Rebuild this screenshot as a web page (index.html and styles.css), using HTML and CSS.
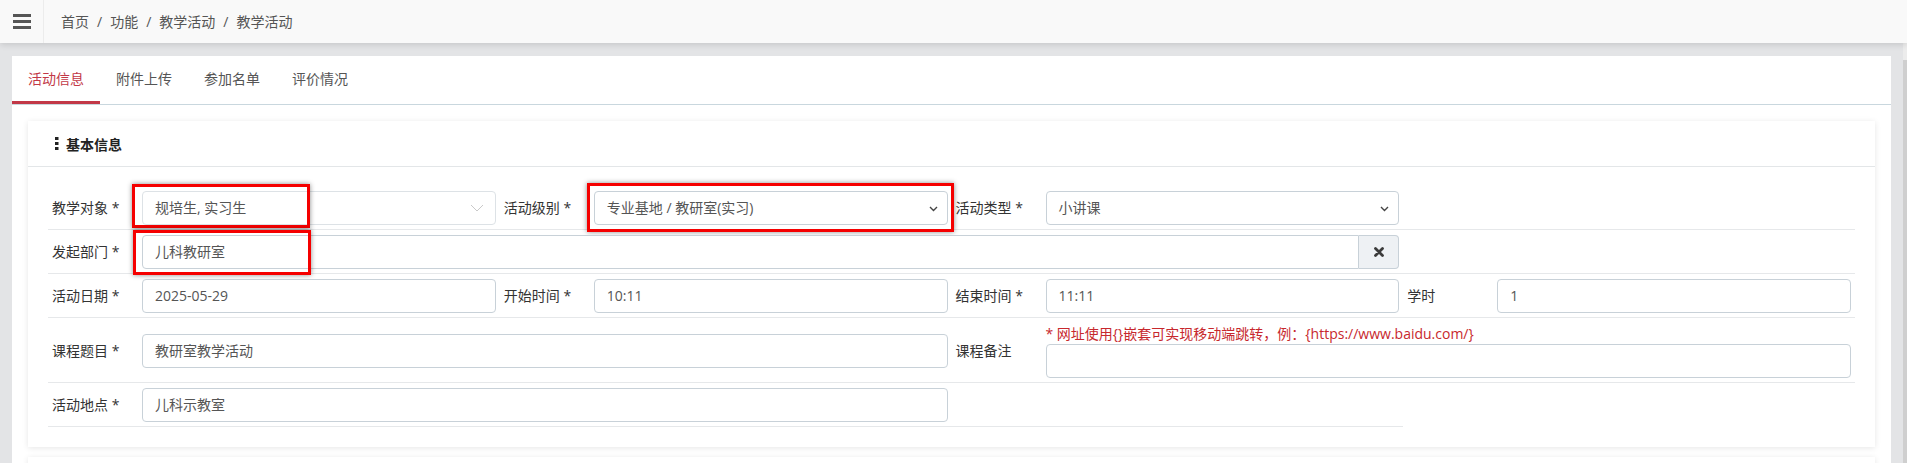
FILE: index.html
```html
<!DOCTYPE html>
<html lang="zh-CN">
<head>
    <meta charset="UTF-8">
    <meta name="viewport" content="width=device-width, initial-scale=1.0">
    <title>教学活动</title>
    <link rel="stylesheet" href="styles.css">
</head>
<body>
    <header class="topbar">
        <div class="menu-toggle">
            <span></span><span></span><span></span>
        </div>
        <nav class="crumbs">
            <span>首页</span><span class="sep">/</span><span>功能</span><span class="sep">/</span><span>教学活动</span><span class="sep">/</span><span>教学活动</span>
        </nav>
    </header>
    <div class="page">
        <main class="content">
            <div class="panel">
                <ul class="tabs">
                    <li class="active">活动信息</li>
                    <li>附件上传</li>
                    <li>参加名单</li>
                    <li>评价情况</li>
                </ul>
                <div class="tab-body">
                    <section class="box">
                        <div class="box-head">
                            <svg class="dots" width="4" height="13" viewBox="0 0 4 13"><rect x="0" y="0" width="3.5" height="3"/><rect x="0" y="5" width="3.5" height="3"/><rect x="0" y="10" width="3.5" height="3"/></svg>
                            <span>基本信息</span>
                        </div>
                        <div class="box-body">
                            <!-- 第一行：对象 / 级别 / 类型 -->
                            <div class="row">
                                <div class="field">
                                    <label>教学对象 *</label>
                                    <div class="control">
                                        <div class="input multi">规培生, 实习生
                                            <svg class="caret-light" width="14" height="8" viewBox="0 0 14 8"><path d="M1 1l6 6 6-6" fill="none" stroke="#c9c9c9" stroke-width="1"/></svg>
                                        </div>
                                        <div class="mark mark-target"></div>
                                    </div>
                                </div>
                                <div class="field">
                                    <label>活动级别 *</label>
                                    <div class="control">
                                        <div class="input select">专业基地 / 教研室(实习)
                                            <svg class="caret" width="9" height="6" viewBox="0 0 9 6"><path d="M1 1l3.5 3.5L8 1" fill="none" stroke="#444" stroke-width="1.4"/></svg>
                                        </div>
                                        <div class="mark mark-level"></div>
                                    </div>
                                </div>
                                <div class="field">
                                    <label>活动类型 *</label>
                                    <div class="control">
                                        <div class="input select">小讲课
                                            <svg class="caret" width="9" height="6" viewBox="0 0 9 6"><path d="M1 1l3.5 3.5L8 1" fill="none" stroke="#444" stroke-width="1.4"/></svg>
                                        </div>
                                    </div>
                                </div>
                            </div>
                            <!-- 发起部门 -->
                            <div class="row">
                                <div class="field span-3">
                                    <label>发起部门 *</label>
                                    <div class="control">
                                        <div class="input-group">
                                            <div class="input">儿科教研室</div>
                                            <span class="addon">
                                                <svg width="10" height="10" viewBox="0 0 10 10"><path d="M1.5 1.5l7 7M8.5 1.5l-7 7" stroke="#3b3b3b" stroke-width="2.8" stroke-linecap="round"/></svg>
                                            </span>
                                        </div>
                                        <div class="mark mark-dept"></div>
                                    </div>
                                </div>
                            </div>
                            <!-- 时间 -->
                            <div class="row">
                                <div class="field">
                                    <label>活动日期 *</label>
                                    <div class="control"><div class="input">2025-05-29</div></div>
                                </div>
                                <div class="field">
                                    <label>开始时间 *</label>
                                    <div class="control"><div class="input">10:11</div></div>
                                </div>
                                <div class="field">
                                    <label>结束时间 *</label>
                                    <div class="control"><div class="input">11:11</div></div>
                                </div>
                                <div class="field">
                                    <label>学时</label>
                                    <div class="control"><div class="input">1</div></div>
                                </div>
                            </div>
                            <!-- 题目与备注 -->
                            <div class="row">
                                <div class="field span-2">
                                    <label>课程题目 *</label>
                                    <div class="control"><div class="input">教研室教学活动</div></div>
                                </div>
                                <div class="field span-2">
                                    <label>课程备注</label>
                                    <div class="control">
                                        <p class="hint">* 网址使用{}嵌套可实现移动端跳转，例：{https://www.baidu.com/}</p>
                                        <div class="input"></div>
                                    </div>
                                </div>
                            </div>
                            <div class="row row-short">
                                <div class="field span-2">
                                    <label>活动地点 *</label>
                                    <div class="control"><div class="input">儿科示教室</div></div>
                                </div>
                            </div>
                        </div>
                    </section>
                    <section class="box box-next"></section>
                </div>
            </div>
        </main>
        <div class="scrollbar"></div>
    </div>
</body>
</html>
```

FILE: styles.css
```css
html, body {
    margin: 0;
    padding: 0;
    height: 100%;
    overflow: hidden;
}
body {
    font-family: "Open Sans", "Noto Sans CJK SC", sans-serif;
    font-size: 14px;
    color: #333;
    background-color: #e3e4e6;
}
.topbar {
    position: relative;
    z-index: 2;
    display: flex;
    align-items: center;
    height: 43px;
    background-color: #f9f9f9;
    box-shadow: 0 2px 6px rgba(0, 0, 0, 0.12);
}
.menu-toggle {
    display: flex;
    flex-direction: column;
    justify-content: center;
    gap: 3px;
    width: 44px;
    height: 43px;
    padding-left: 13px;
    box-sizing: border-box;
    border-right: 1px solid #ececec;
}
.menu-toggle span {
    display: block;
    width: 18px;
    height: 3px;
    background-color: #555;
}
.crumbs {
    padding-left: 17px;
    color: #555;
    line-height: 20px;
}
.crumbs .sep {
    margin: 0 8px;
}
.page {
    display: flex;
    height: calc(100% - 43px);
}
.content {
    flex: 1;
    padding: 13px 12px 0 12px;
    overflow: hidden;
}
.scrollbar {
    width: 4px;
    background: linear-gradient(#ececec 17px, #cfcfcf 17px);
}
.panel {
    background-color: #fff;
    min-height: 100%;
}
.tabs {
    display: flex;
    margin: 0;
    padding: 0;
    list-style: none;
    border-bottom: 1px solid #c9d7de;
}
.tabs li {
    height: 48px;
    line-height: 45px;
    padding: 0 16px;
    box-sizing: border-box;
    color: #555;
    border-bottom: 3px solid transparent;
}
.tabs li.active {
    color: #c23847;
    border-bottom-color: #c23847;
}
.tab-body {
    padding: 16px;
}
.box {
    background-color: #fff;
    box-shadow: 0 1px 6px rgba(0, 0, 0, 0.1);
    margin-bottom: 10px;
}
.box-next {
    height: 60px;
}
.box-head {
    display: flex;
    align-items: center;
    gap: 7px;
    height: 45px;
    padding-left: 27px;
    border-bottom: 1px solid #e3e6e8;
    font-weight: bold;
    color: #222;
}
.dots rect {
    fill: #222;
}
.box-body {
    padding: 19px 20px 20px;
}
.row {
    display: grid;
    grid-template-columns: repeat(4, 1fr);
    padding: 5px 0 4px;
    border-bottom: 1px solid #e6e8ea;
}
.row-short {
    width: 75%;
    grid-template-columns: repeat(3, 1fr);
}
.field {
    display: flex;
    align-items: center;
    min-width: 0;
}
.field.span-2 {
    grid-column: span 2;
}
.field.span-3 {
    grid-column: span 3;
}
.field label {
    flex: none;
    width: 86px;
    padding-left: 4px;
    line-height: 20px;
}
.field .control {
    position: relative;
    flex: 1;
    min-width: 0;
    margin: 0 4px;
}
.hint {
    margin: 0;
    line-height: 21px;
    font-size: 14px;
    color: #c7282d;
    white-space: nowrap;
}
.input {
    position: relative;
    height: 34px;
    line-height: 32px;
    padding: 0 12px;
    box-sizing: border-box;
    border: 1px solid #c8d1d8;
    border-radius: 4px;
    background-color: #fff;
    color: #555;
    white-space: nowrap;
}
.input.multi {
    border-color: #dde2e6;
}
.caret-light {
    position: absolute;
    right: 11px;
    top: 12px;
}
.caret {
    position: absolute;
    right: 9px;
    top: 14px;
}
.input-group {
    display: flex;
}
.input-group .input {
    flex: 1;
    border-radius: 4px 0 0 4px;
}
.input-group .addon {
    display: flex;
    align-items: center;
    justify-content: center;
    width: 40px;
    height: 34px;
    box-sizing: border-box;
    border: 1px solid #c8d1d8;
    border-left: none;
    border-radius: 0 4px 4px 0;
    background-color: #eef1f4;
}
/* 红框标注 */
.mark {
    position: absolute;
    box-sizing: border-box;
    border: 3px solid #f50000;
    box-shadow: 0 0 5px rgba(0, 0, 0, 0.45);
    pointer-events: none;
}
.mark-target {
    left: -10px;
    top: -7px;
    width: 178px;
    height: 44px;
}
.mark-dept {
    left: -9px;
    top: -5px;
    width: 178px;
    height: 45px;
}
.mark-level {
    left: -7px;
    top: -8px;
    width: 367px;
    height: 49px;
}
```
